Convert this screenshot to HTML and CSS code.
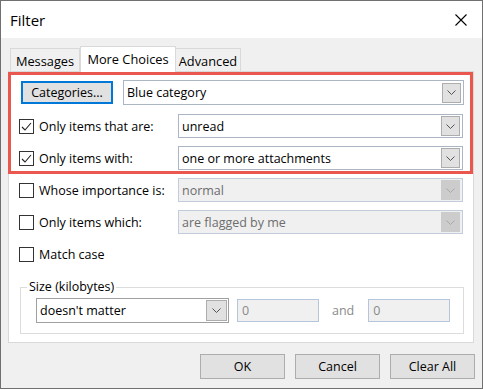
FILE: index.html
```html
<!DOCTYPE html>
<html lang="en">

<head>
    <meta charset="UTF-8">
    <title>Filter</title>
    <link rel="stylesheet" href="styles.css">
</head>

<body>
    <div class="window">
        <div class="titlebar">
            <span class="title">Filter</span>
            <svg class="close" width="12" height="12" viewBox="0 0 12 12">
                <path d="M0.5 0.5L11.5 11.5M11.5 0.5L0.5 11.5" stroke="#000" stroke-width="1.1" fill="none" />
            </svg>
        </div>

        <div class="content">
            <div class="tabs">
                <div class="tab tab-messages">Messages</div>
                <div class="tab tab-active">More Choices</div>
                <div class="tab tab-advanced">Advanced</div>
            </div>

            <div class="panel">
                <div class="highlight">
                    <div class="row row-first">
                        <button class="btn btn-focus">Categories...</button>
                        <div class="combo combo-wide">
                            <span>Blue category</span>
                            <span class="arrow"><svg width="9" height="5" viewBox="0 0 9 5"><polyline points="0.5,0.5 4.5,4.5 8.5,0.5" /></svg></span>
                        </div>
                    </div>
                    <div class="row row-second">
                        <label class="check"><span class="box"><svg width="13" height="13" viewBox="0 0 13 13"><polyline points="2,7 5,10 11,3" /></svg></span>Only items that are:</label>
                        <div class="combo">
                            <span>unread</span>
                            <span class="arrow"><svg width="9" height="5" viewBox="0 0 9 5"><polyline points="0.5,0.5 4.5,4.5 8.5,0.5" /></svg></span>
                        </div>
                    </div>
                    <div class="row">
                        <label class="check"><span class="box"><svg width="13" height="13" viewBox="0 0 13 13"><polyline points="2,7 5,10 11,3" /></svg></span>Only items with:</label>
                        <div class="combo">
                            <span>one or more attachments</span>
                            <span class="arrow"><svg width="9" height="5" viewBox="0 0 9 5"><polyline points="0.5,0.5 4.5,4.5 8.5,0.5" /></svg></span>
                        </div>
                    </div>
                </div>

                <div class="plain">
                    <div class="row row-gap">
                        <label class="check"><span class="box"></span>Whose importance is:</label>
                        <div class="combo disabled">
                            <span>normal</span>
                            <span class="arrow"><svg width="9" height="5" viewBox="0 0 9 5"><polyline points="0.5,0.5 4.5,4.5 8.5,0.5" /></svg></span>
                        </div>
                    </div>
                    <div class="row">
                        <label class="check"><span class="box"></span>Only items which:</label>
                        <div class="combo disabled">
                            <span>are flagged by me</span>
                            <span class="arrow"><svg width="9" height="5" viewBox="0 0 9 5"><polyline points="0.5,0.5 4.5,4.5 8.5,0.5" /></svg></span>
                        </div>
                    </div>
                    <div class="row">
                        <label class="check"><span class="box"></span>Match case</label>
                    </div>
                </div>

                <fieldset class="group">
                    <legend>Size (kilobytes)</legend>
                    <div class="size-row">
                        <div class="combo size-combo">
                            <span>doesn't matter</span>
                            <span class="arrow"><svg width="9" height="5" viewBox="0 0 9 5"><polyline points="0.5,0.5 4.5,4.5 8.5,0.5" /></svg></span>
                        </div>
                        <div class="num">0</div>
                        <span class="and">and</span>
                        <div class="num">0</div>
                    </div>
                </fieldset>
            </div>

            <div class="buttons">
                <button class="btn">OK</button>
                <button class="btn">Cancel</button>
                <button class="btn">Clear All</button>
            </div>
        </div>
    </div>
</body>

</html>
```

FILE: styles.css
```css
* {
    box-sizing: border-box;
}

body {
    margin: 0;
    font-family: "Open Sans", "Noto Sans", sans-serif;
    font-size: 12.5px;
    color: #000;
    background: #fff;
}

.window {
    width: 483px;
    height: 389px;
    border: 1px solid #707070;
    background: #f0f0f0;
}

.titlebar {
    height: 37px;
    background: #fff;
    display: flex;
    align-items: center;
    justify-content: space-between;
    padding: 0 15px 0 9px;
}

.title {
    font-size: 15px;
}

.close {
    display: block;
}

.content {
    padding: 0 8px 0 7px;
}

/* tabs */
.tabs {
    display: flex;
    align-items: flex-end;
    height: 26px;
    margin-top: 8px;
    margin-bottom: -1px;
    padding-left: 2px;
    position: relative;
    z-index: 1;
    font-size: 12.8px;
}

.tab {
    height: 23px;
    margin-bottom: 1px;
    border: 1px solid #d9d9d9;
    border-bottom: none;
    background: #f0f0f0;
    display: flex;
    align-items: center;
    justify-content: center;
    padding-top: 2px;
}

.tab-messages {
    width: 70px;
}

.tab-active {
    width: 96px;
    height: 26px;
    margin-bottom: 0;
    background: #fff;
    padding: 0 0 2px 0;
}

.tab-advanced {
    width: 66px;
    margin-left: -1px;
}

/* panel */
.panel {
    height: 272px;
    background: #fff;
    border: 1px solid #d9d9d9;
}

.highlight {
    margin-left: -1px;
    width: 465px;
    border: 3px solid #e9574e;
    padding: 5px 0 1px 0;
}

.plain {
    padding-left: 2px;
}

.row {
    display: flex;
    align-items: center;
    height: 24px;
    margin-top: 8px;
}

.row-first {
    height: 25px;
    margin-top: 0;
    padding-left: 10px;
}

.row-second {
    margin-top: 9px;
}

.row-gap {
    margin-top: 4px;
}

.check {
    display: flex;
    align-items: center;
    width: 167px;
    padding-left: 8px;
}

.box {
    width: 15px;
    height: 15px;
    border: 1px solid #333;
    margin-right: 5px;
    background: #fff;
    display: flex;
    align-items: center;
    justify-content: center;
}

.box svg polyline {
    fill: none;
    stroke: #222;
    stroke-width: 1.1;
}

/* combo boxes */
.combo {
    width: 285px;
    height: 24px;
    border: 1px solid #abb5c3;
    background: #fff;
    display: flex;
    align-items: center;
    justify-content: space-between;
    padding: 0 2px 0 3px;
}

.combo-wide {
    width: 341px;
    height: 25px;
    margin-left: 10px;
}

.arrow {
    width: 19px;
    height: 20px;
    background: #e1e1e1;
    border: 1px solid #adadad;
    display: flex;
    align-items: center;
    justify-content: center;
}

.arrow svg polyline {
    fill: none;
    stroke: #555;
    stroke-width: 1;
}

.combo.disabled {
    background: #f0f0f0;
    border-color: #c2cddb;
    color: #6d6d6d;
}

.combo.disabled .arrow {
    background: #cccccc;
    border-color: #cccccc;
}

.combo.disabled .arrow svg polyline {
    stroke: #a9a9a9;
}

/* size group */
.group {
    margin: 12px 0 0 11px;
    width: 444px;
    border: 1px solid #dcdcdc;
    padding: 0 0 10px 0;
    min-width: 0;
}

.group legend {
    margin-left: 6px;
    padding: 0 2px;
    line-height: 18px;
}

.size-row {
    display: flex;
    align-items: center;
    margin-top: 2px;
    padding-left: 15px;
}

.size-combo {
    width: 193px;
    height: 25px;
    border-color: #a0a0a0;
}

.size-combo .arrow {
    width: 21px;
    height: 21px;
    margin-right: -1px;
}

.num {
    width: 82px;
    height: 23px;
    margin-left: 8px;
    border: 1px solid #b4c5dc;
    background: #f0f0f0;
    color: #8a8a8a;
    padding-left: 4px;
    line-height: 21px;
}

.and {
    margin: 0 14px 0 13px;
    color: #8a8a8a;
}

.and + .num {
    margin-left: 0;
}

/* buttons */
.btn {
    width: 85px;
    height: 25px;
    background: #e1e1e1;
    border: 1px solid #adadad;
    font-family: inherit;
    font-size: inherit;
    color: #000;
    padding: 0;
}

.btn-focus {
    width: 92px;
    height: 23px;
    border: 2px solid #0078d7;
}

.buttons {
    display: flex;
    justify-content: flex-end;
    gap: 10px;
    margin-top: 11px;
    margin-right: -1px;
}
```
